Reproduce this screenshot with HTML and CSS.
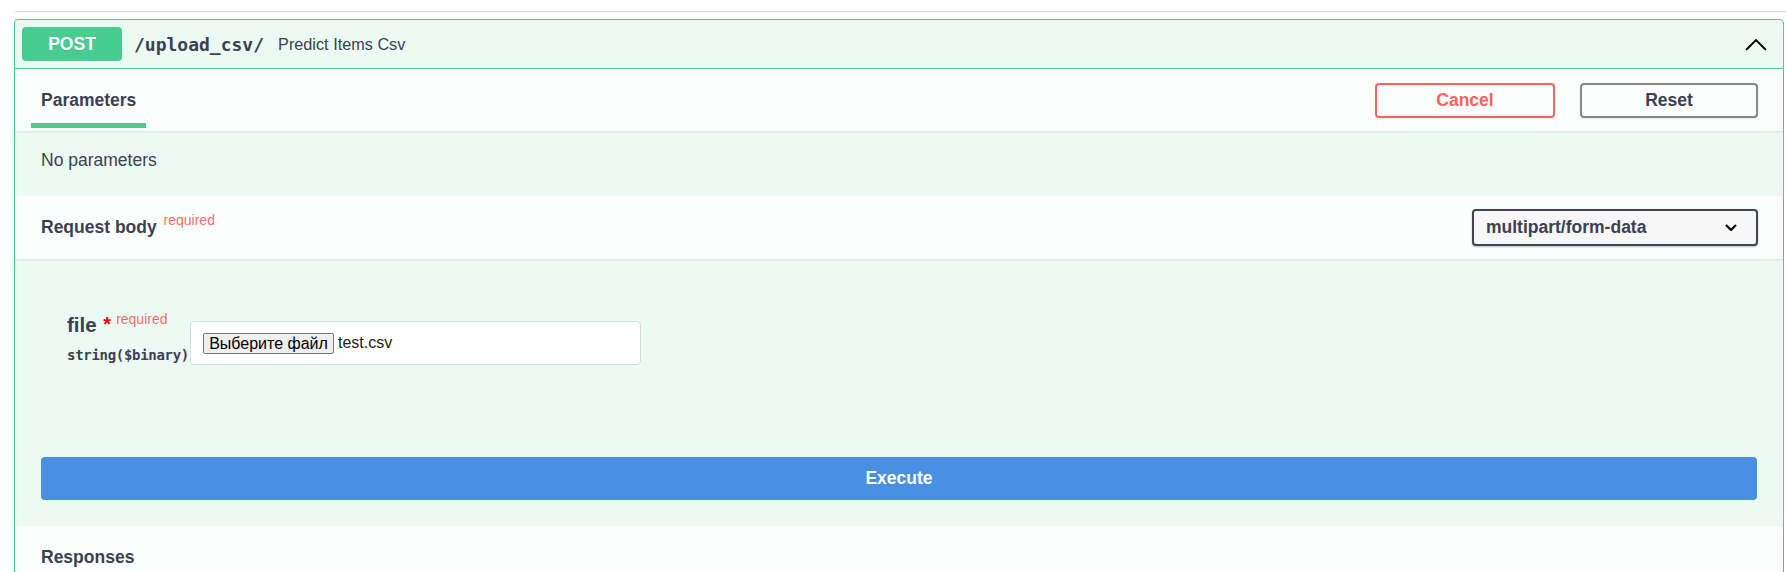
FILE: index.html
```html
<!DOCTYPE html>
<html lang="en">
<head>
<meta charset="utf-8">
<title>POST /upload_csv/</title>
<link rel="stylesheet" href="styles.css">
</head>
<body>
<div class="page">
  <div class="rule"></div>
  <div class="opblock">
    <div class="summary">
      <span class="method">POST</span>
      <span class="path">/upload_csv/</span>
      <span class="desc">Predict Items Csv</span>
      <svg class="arrow" width="22" height="13" viewBox="0 0 22 13" aria-hidden="true">
        <polyline points="1,12 11,2 21,12" fill="none" stroke="#000" stroke-width="1.8"/>
      </svg>
    </div>

    <div class="section-header tab-header">
      <div class="tab">Parameters</div>
      <div class="actions">
        <button class="btn cancel">Cancel</button>
        <button class="btn reset">Reset</button>
      </div>
    </div>

    <div class="no-params">No parameters</div>

    <div class="section-header rb-header">
      <h4 class="rb-title">Request body <sup class="req">required</sup></h4>
      <div class="select">
        <span>multipart/form-data</span>
        <svg class="sel-arrow" width="12" height="7" viewBox="0 0 12 7" aria-hidden="true">
          <polyline points="1,1 6,6 11,1" fill="none" stroke="#000" stroke-width="2.2"/>
        </svg>
      </div>
    </div>

    <div class="body">
      <div class="param-row">
        <div class="param-name">
          <div class="name">file <span class="star">*</span><sup class="req">required</sup></div>
          <div class="type">string($binary)</div>
        </div>
        <div class="file-input">
          <span class="file-btn">Выберите файл</span>
          <span class="file-name">test.csv</span>
        </div>
      </div>
      <button class="execute">Execute</button>
    </div>

    <div class="section-header responses">
      <h4 class="resp-title">Responses</h4>
    </div>
  </div>
</div>
</body>
</html>
```

FILE: styles.css
```css
html, body {
  margin: 0;
  padding: 0;
  background: #fff;
}

body {
  font-family: "Liberation Sans", Arial, sans-serif;
  color: #3b4151;
  overflow: hidden;
}

.page {
  padding-top: 11px;
}

.rule {
  margin-left: 15px;
  border-top: 1px solid #d9d9d9;
}

.opblock {
  margin: 7px 2px 0 14px;
  border: 1px solid #49cc90;
  border-radius: 4px;
  background: rgba(73, 204, 144, 0.1);
}

.summary {
  display: flex;
  align-items: center;
  height: 48px;
  padding: 0 16px 0 7px;
  border-bottom: 1px solid #49cc90;
}

.method {
  width: 100px;
  height: 34px;
  border-radius: 4px;
  background: #49cc90;
  color: #fff;
  font-weight: bold;
  font-size: 17.5px;
  display: flex;
  align-items: center;
  justify-content: center;
  text-shadow: 0 1px 0 rgba(0, 0, 0, 0.1);
}

.path {
  margin-left: 12px;
  font-family: "DejaVu Sans Mono", "Liberation Mono", monospace;
  font-weight: bold;
  font-size: 18px;
  color: #3b4151;
}

.desc {
  margin-left: 14px;
  font-size: 16.25px;
  color: #3b4151;
}

.arrow {
  margin-left: auto;
  display: block;
}

.section-header {
  display: flex;
  align-items: center;
  padding: 0 25px 0 26px;
  background: rgba(255, 255, 255, 0.8);
  box-shadow: 0 1px 2px rgba(0, 0, 0, 0.1);
  position: relative;
}

.tab-header {
  height: 62px;
}

.tab {
  position: relative;
  font-weight: bold;
  font-size: 17.5px;
  line-height: 20px;
  margin-top: -1px;
}

.tab::after {
  content: "";
  position: absolute;
  left: -10%;
  width: 120%;
  bottom: -18px;
  height: 5px;
  background: #49cc90;
}

.actions {
  margin-left: auto;
  display: flex;
  gap: 25px;
}

.btn {
  height: 35px;
  border-radius: 4px;
  background: transparent;
  font-family: "Liberation Sans", Arial, sans-serif;
  font-weight: bold;
  font-size: 17.5px;
  box-shadow: 0 1px 2px rgba(0, 0, 0, 0.1);
  padding: 0;
}

.cancel {
  width: 180px;
  border: 2px solid #ff6060;
  color: #ff6060;
}

.reset {
  width: 178px;
  border: 2px solid #888;
  color: #3b4151;
}

.no-params {
  padding: 19px 26px 26px;
  font-size: 17.5px;
  line-height: 20px;
}

.rb-header {
  height: 63px;
}

.rb-title,
.resp-title {
  margin: 0;
  font-size: 17.5px;
  font-weight: bold;
  line-height: 20px;
}

.rb-title .req {
  margin-left: 2px;
}

.req {
  font-size: 14px;
  font-weight: normal;
  color: rgba(255, 0, 0, 0.6);
  vertical-align: 0;
  position: relative;
  top: -8px;
}

.select {
  margin-left: auto;
  box-sizing: border-box;
  width: 286px;
  height: 37px;
  border: 2px solid #41444e;
  border-radius: 4px;
  background: #f7f7f7;
  box-shadow: 0 1px 2px 0 rgba(0, 0, 0, 0.25);
  display: flex;
  align-items: center;
  padding: 0 19px 0 12px;
  font-weight: bold;
  font-size: 17.5px;
  color: #3b4151;
}

.sel-arrow {
  margin-left: auto;
  display: block;
}

.body {
  padding: 54px 26px 26px;
}

.param-row {
  display: flex;
  align-items: flex-start;
  padding-left: 26px;
}

.param-name {
  width: 123px;
  flex-shrink: 0;
  white-space: nowrap;
}

.name {
  font-weight: bold;
  font-size: 20.5px;
  line-height: 24px;
}

.star {
  color: red;
  font-size: 20px;
  position: relative;
  top: -1px;
  margin-left: 1px;
}

.name .req {
  margin-left: 5px;
  top: -8px;
}

.type {
  margin-top: 7px;
  font-family: "DejaVu Sans Mono", "Liberation Mono", monospace;
  font-weight: bold;
  font-size: 14px;
  line-height: 18px;
  letter-spacing: -0.3px;
  color: #3b4151;
}

.file-input {
  margin-top: 8px;
  box-sizing: border-box;
  width: 451px;
  height: 44px;
  border: 1px solid #d9d9d9;
  border-radius: 4px;
  background: #fff;
  display: flex;
  align-items: center;
  padding: 0 12px;
}

.file-btn {
  box-sizing: border-box;
  width: 131px;
  height: 21px;
  border: 1px solid #767676;
  border-radius: 2px;
  background: #efefef;
  color: #000;
  font-size: 16px;
  line-height: 19px;
  text-align: center;
}

.file-name {
  margin-left: 4px;
  font-size: 16px;
  color: #222;
}

.execute {
  display: block;
  width: 100%;
  height: 43px;
  margin-top: 92px;
  border: 0;
  border-radius: 4px;
  background: #4990e2;
  color: #fff;
  font-family: "Liberation Sans", Arial, sans-serif;
  font-weight: bold;
  font-size: 17.5px;
}

.responses {
  height: 61px;
}
```
